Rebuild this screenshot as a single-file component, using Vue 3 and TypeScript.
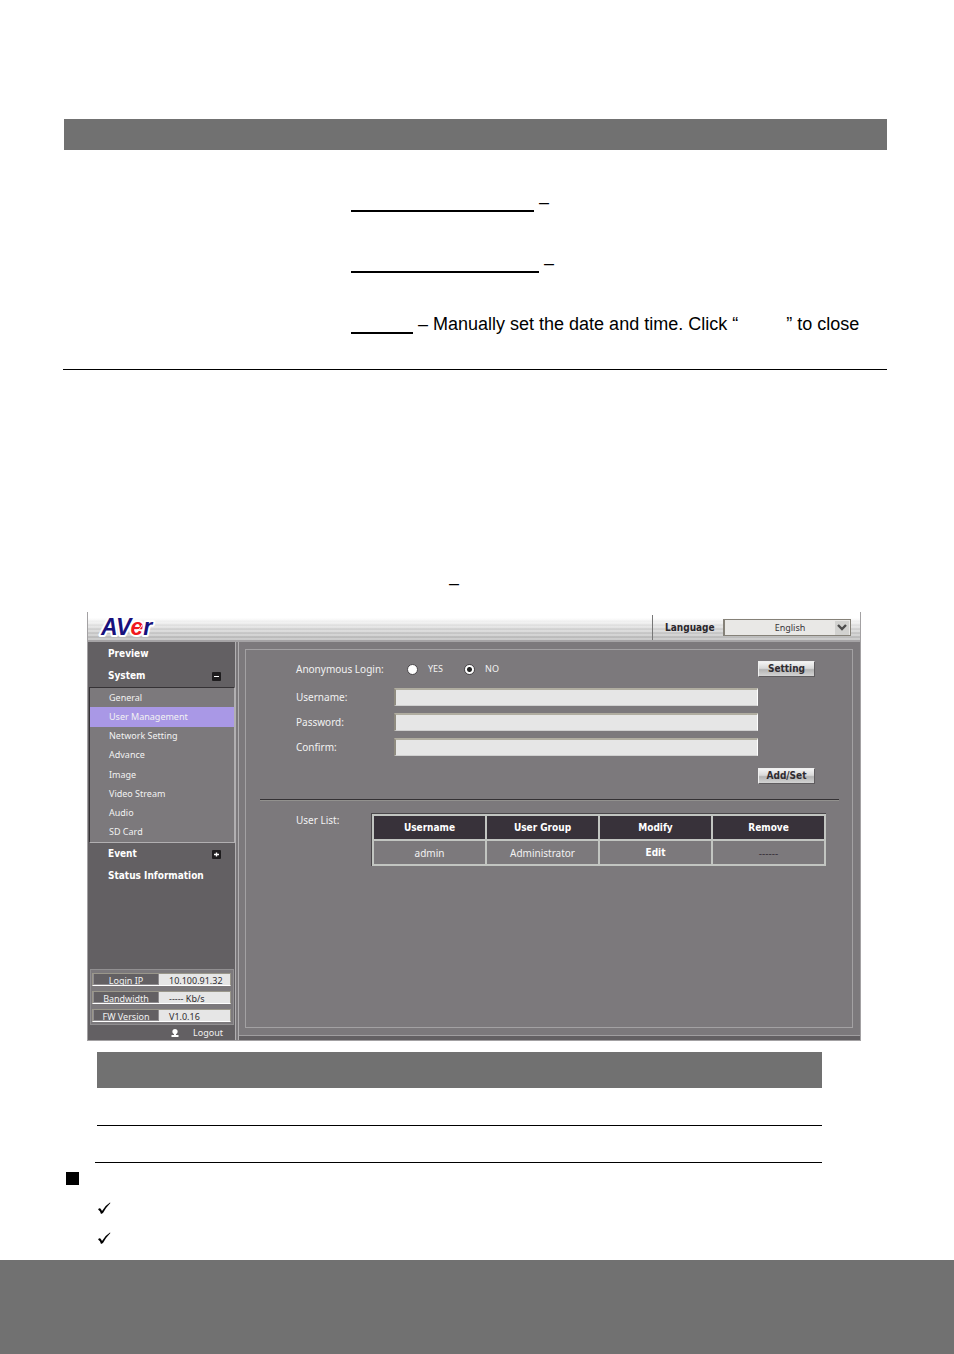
<script setup lang="ts">
import { ref } from 'vue'

const subItems: string[] = [
  'General',
  'User Management',
  'Network Setting',
  'Advance',
  'Image',
  'Video Stream',
  'Audio',
  'SD Card',
]
const current = ref('User Management')
const anonymous = ref('no')
const language = ref('English')

const fields = ref([
  { id: 'username', label: 'Username:', type: 'text', value: '' },
  { id: 'password', label: 'Password:', type: 'password', value: '' },
  { id: 'confirm', label: 'Confirm:', type: 'password', value: '' },
])

const status = [
  { label: 'Login IP', value: '10.100.91.32' },
  { label: 'Bandwidth', value: '----- Kb/s' },
  { label: 'FW Version', value: 'V1.0.16' },
]
</script>

<template>
  <main class="page">
    <section class="options">
      <div class="band"></div>
      <div class="notes">
        <p><span class="blank long"></span> –</p>
        <p><span class="blank longer"></span> –</p>
        <p><span class="blank short"></span> – Manually set the date and time. Click “<span class="gap"></span>” to close</p>
      </div>
    </section>

    <p class="lead">–</p>

    <section class="app">
      <header class="top">
        <svg class="logo" width="60" height="28" viewBox="0 0 60 28" role="img" aria-label="AVer">
          <text x="3" y="23"><tspan>AV</tspan><tspan class="red">e</tspan><tspan>r</tspan></text>
          <path d="M36 18 q6 1 8 -5" fill="none" stroke="#fff" stroke-width="1" />
        </svg>
        <div class="lang">
          <label for="lang">Language</label>
          <div class="select">
            <select id="lang" v-model="language">
              <option>English</option>
            </select>
            <svg width="14" height="14" viewBox="0 0 14 14" aria-hidden="true">
              <rect width="14" height="14" fill="#d2d2d0" />
              <path d="M3 4 L7 8 L11 4" fill="none" stroke="#4c4c4c" stroke-width="2.4" />
            </svg>
          </div>
        </div>
      </header>

      <div class="body">
        <aside class="side">
          <nav>
            <a class="head" href="#preview">Preview</a>
            <a class="head" href="#system">System
              <svg width="9" height="9" viewBox="0 0 9 9" aria-hidden="true">
                <rect width="9" height="9" rx="1" fill="#1e1c1e" /><path d="M2 4.5 H7" stroke="#fff" />
              </svg>
            </a>
            <div class="sub">
              <a
                v-for="item in subItems"
                :key="item"
                href="#system"
                :class="{ active: item === current }"
                @click.prevent="current = item"
              >{{ item }}</a>
            </div>
            <a class="head" href="#event">Event
              <svg width="9" height="9" viewBox="0 0 9 9" aria-hidden="true">
                <rect width="9" height="9" rx="1" fill="#1e1c1e" /><path d="M2 4.5 H7 M4.5 2.5 V6.5" stroke="#fff" stroke-width="1.4" />
              </svg>
            </a>
            <a class="head" href="#status">Status Information</a>
          </nav>
          <dl class="status">
            <div v-for="row in status" :key="row.label">
              <dt>{{ row.label }}</dt>
              <dd>{{ row.value }}</dd>
            </div>
          </dl>
          <a class="logout" href="#logout">
            <svg width="8" height="8" viewBox="0 0 8 8" aria-hidden="true">
              <circle cx="4" cy="2.6" r="2.6" fill="#fff" /><path d="M3 4 H5 V6 H7.5 V8 H0.5 V6 H3 Z" fill="#fff" />
            </svg>
            Logout
          </a>
        </aside>

        <div class="content">
          <form class="panel" @submit.prevent>
            <div class="form">
              <span id="anon" class="anon">Anonymous Login:</span>
              <div class="radios" role="radiogroup" aria-labelledby="anon">
                <label><input v-model="anonymous" type="radio" name="anonymous" value="yes" />YES</label>
                <label><input v-model="anonymous" type="radio" name="anonymous" value="no" />NO</label>
              </div>
              <button type="button">Setting</button>
              <template v-for="field in fields" :key="field.id">
                <label :for="field.id">{{ field.label }}</label>
                <input :id="field.id" v-model="field.value" class="field" :type="field.type" />
              </template>
              <button class="add" type="submit">Add/Set</button>
            </div>
            <hr />
            <div class="list">
              <span id="list-label">User List:</span>
              <table aria-labelledby="list-label">
                <thead>
                  <tr><th>Username</th><th>User Group</th><th>Modify</th><th>Remove</th></tr>
                </thead>
                <tbody>
                  <tr>
                    <td>admin</td>
                    <td>Administrator</td>
                    <td><a href="#edit">Edit</a></td>
                    <td class="none">------</td>
                  </tr>
                </tbody>
              </table>
            </div>
          </form>
        </div>
      </div>
    </section>

    <section class="lower">
      <div class="band tall"></div>
      <div class="line"></div>
      <div class="line wide"></div>
    </section>

    <div class="bullets">
      <span class="square"></span>
      <ul>
        <li v-for="n in 2" :key="n">
          <svg width="13" height="13" viewBox="0 0 13 13" aria-hidden="true">
            <path d="M0.3 7 Q1.8 5.6 3 7.2 L4 9 Q7 3.4 12 0.4 L12.4 1 Q7.8 5.6 5 11 L3 12 Q2.2 8.8 0.3 7.8 Z" />
          </svg>
        </li>
      </ul>
    </div>

    <footer></footer>
  </main>
</template>

<style>
body {
  margin: 0;
  background: #fff;
}
</style>

<style scoped>
* {
  box-sizing: border-box;
}
.page {
  min-height: 100vh;
  display: flex;
  flex-direction: column;
  padding-top: 119px;
  color: #000;
  font: 18px/20px "Liberation Sans", Arial, sans-serif;
}
p,
dl,
dd,
ul {
  margin: 0;
  padding: 0;
}
.options {
  margin: 0 67px 0 63px;
  border-bottom: 1px solid #000;
}
.band {
  height: 31px;
  background: #717171;
}
.options .band {
  margin-left: 1px;
}
.band.tall {
  height: 36px;
}
.notes {
  display: grid;
  gap: 41px;
  padding: 42px 0 35px 288px;
}
.notes p {
  height: 20px;
  white-space: nowrap;
}
.blank {
  display: inline-block;
  height: 2px;
  background: #000;
  vertical-align: -4px;
}
.long {
  width: 183px;
}
.longer {
  width: 188px;
}
.short {
  width: 62px;
}
.gap {
  display: inline-block;
  width: 48px;
}
.lead {
  padding: 203px 0 19px 449px;
}
a {
  color: inherit;
  text-decoration: none;
}
.app {
  display: flex;
  flex-direction: column;
  min-height: 429px;
  margin: 0 93px 0 87px;
  border: 1px solid #a3a1a3;
  border-top: 0;
  background: #7c797c;
  color: #f2f2f2;
  font: 10px/12px "Noto Sans", Tahoma, sans-serif;
}
.top {
  display: flex;
  align-items: center;
  justify-content: space-between;
  height: 30px;
  padding: 0 9px 0 10px;
  border-bottom: 2px solid #a5a3a5;
  background:
    repeating-linear-gradient(rgba(255, 255, 255, 0) 0 2px, rgba(255, 255, 255, 0.3) 2px 4px),
    linear-gradient(#fff 20%, #d2d2d2 60%, #b4b4b4);
}
.logo text {
  font: italic bold 23px "Liberation Sans", Arial, sans-serif;
  fill: #17107c;
  stroke: #fff;
  stroke-width: 4px;
  stroke-linejoin: round;
  paint-order: stroke;
}
.logo .red {
  fill: #f01820;
}
.lang {
  display: flex;
  align-items: center;
  align-self: stretch;
  padding-left: 12px;
  margin-top: 3px;
  border-left: 1px solid #777;
  color: #29262b;
}
.lang label {
  width: 58px;
  font: bold 10px/14px "DejaVu Sans Condensed", "DejaVu Sans", sans-serif;
}
.select {
  display: flex;
  align-items: center;
  width: 128px;
  height: 17px;
  padding-right: 1px;
  border: 1px solid #858178;
  border-width: 1px 1px 1px 2px;
  background: #e9e8e6;
}
select {
  flex: 1;
  min-width: 0;
  height: 14px;
  padding: 0 0 0 20px;
  border: 0;
  appearance: none;
  background: transparent;
  color: #39363a;
  font: 9px/14px "Noto Sans", sans-serif;
  text-align: center;
  text-align-last: center;
}
.body {
  flex: 1;
  display: flex;
}
.side {
  display: flex;
  flex-direction: column;
  width: 148px;
  border-right: 1px solid #b1afb1;
  background: #636063;
}
nav {
  display: flex;
  flex-direction: column;
  padding-top: 1px;
}
.head {
  display: flex;
  align-items: center;
  justify-content: space-between;
  height: 22px;
  padding: 0 14px 0 20px;
  color: #fff;
  font: bold 10px/12px "DejaVu Sans Condensed", "DejaVu Sans", sans-serif;
}
.sub {
  display: grid;
  grid-auto-rows: 1fr;
  height: 156px;
  margin-left: 1px;
  border: 1px solid #353235;
  border-right: 1px solid #b1afb1;
  border-bottom-color: #b1afb1;
  background: #7c797c;
  font-size: 9px;
}
.sub a {
  display: flex;
  align-items: center;
  padding-left: 19px;
}
.sub .active {
  background: #a998e6;
}
.status {
  display: grid;
  gap: 5px;
  margin: auto 1px 0 2px;
  padding: 3px 2px 2px 1px;
  border: 1px solid #918f91;
  background: #7c797c;
  font-size: 9px;
  line-height: 13px;
}
.status div {
  display: flex;
  height: 13px;
  border: 1px solid #9a978b;
  border-bottom-color: #fff;
}
.status dt {
  width: 66px;
  border: 1px solid #8f8c8f;
  border-top: 0;
  background: #636063;
  text-align: center;
}
.status dd {
  flex: 1;
  padding-left: 10px;
  background: #e6e6e6;
  color: #302e32;
}
.logout {
  display: flex;
  align-items: center;
  justify-content: flex-end;
  gap: 14px;
  height: 15px;
  padding-right: 12px;
  font-size: 9px;
}
.content {
  flex: 1;
  display: flex;
  margin-left: 2px;
  padding: 7px 7px 7px 6px;
  border-left: 1px solid #b1afb1;
  background: linear-gradient(#a09ea0, #a09ea0) bottom 4px left / 100% 1px no-repeat,
    linear-gradient(#636063, #636063) bottom / 100% 4px no-repeat;
}
.panel {
  flex: 1;
  margin-bottom: 5px;
  border: 1px solid #a3a1a3;
}
.form {
  display: grid;
  grid-template-columns: 98px 1fr 57px;
  grid-template-rows: 24px;
  row-gap: 7px;
  align-items: center;
  padding: 7px 37px 0 50px;
}
.anon {
  white-space: nowrap;
}
.radios {
  display: flex;
  gap: 21px;
  padding-left: 13px;
}
.radios label {
  display: flex;
  align-items: center;
  gap: 10px;
  font-size: 9px;
}
.radios input {
  appearance: none;
  width: 11px;
  height: 11px;
  margin: 0;
  border: 1px solid #4a474a;
  border-radius: 50%;
  background: #fff;
}
.radios input:checked {
  background: radial-gradient(circle, #222 2px, #fff 3px);
}
.field {
  grid-column: 2;
  width: 100%;
  height: 18px;
  padding: 0 4px;
  border: 1px solid #b0ada0;
  border-top-width: 2px;
  border-left: 2px solid #8f8b80;
  border-right-color: #fff;
  border-bottom-color: #d0d0d0;
  border-radius: 0;
  background: #e6e6e6;
  font: 10px/12px "Noto Sans", sans-serif;
}
.form label[for] {
  grid-column: 1;
}
button {
  width: 57px;
  height: 16px;
  padding: 0;
  border: 1px solid #efefef;
  border-right-color: #5f5c5f;
  border-bottom-color: #5f5c5f;
  background: linear-gradient(#f4f4f4, #d9d9d9 45%, #b4b4b4 55%, #d4d4d4);
  color: #302c31;
  font: bold 10px/12px "DejaVu Sans Condensed", "DejaVu Sans", sans-serif;
}
.add {
  grid-row: 5;
  grid-column: 3;
  margin-top: 5px;
}
hr {
  height: 2px;
  margin: 15px 13px 12px 14px;
  border: 0;
  border-top: 1px solid #343134;
  border-bottom: 1px solid #92918e;
}
.list {
  display: flex;
  align-items: flex-start;
  padding: 0 26px 0 50px;
}
.list > span {
  width: 75px;
  padding-top: 1px;
}
table {
  flex: 1;
  table-layout: fixed;
  width: 100%;
  border: 1px solid #4a474a;
  border-width: 1px 0 0 1px;
  border-collapse: separate;
  border-spacing: 2px;
  background: #c2c5c1;
  text-align: center;
}
th,
td {
  height: 23px;
  padding: 0;
  border: 0;
}
th {
  background: #38323a;
  color: #fff;
}
th,
td a {
  font: bold 10px/12px "DejaVu Sans Condensed", "DejaVu Sans", sans-serif;
}
td {
  background: #7c797c;
}
td.none {
  color: #38323a;
}
td a {
  color: #fff;
}
.lower {
  margin: 11px 132px 0 95px;
}
.lower .band,
.line {
  margin-left: 2px;
}
.line {
  height: 38px;
  border-bottom: 1px solid #000;
}
.line.wide {
  height: 37px;
  margin-left: 0;
}
.bullets {
  padding: 9px 0 15px 66px;
}
.square {
  display: block;
  width: 13px;
  height: 13px;
  background: #000;
}
ul {
  display: grid;
  gap: 17px;
  padding: 17px 0 0 32px;
  list-style: none;
}
li,
li svg {
  display: block;
  height: 13px;
}
footer {
  flex: 1;
  min-height: 94px;
  background: #717171;
}
</style>
